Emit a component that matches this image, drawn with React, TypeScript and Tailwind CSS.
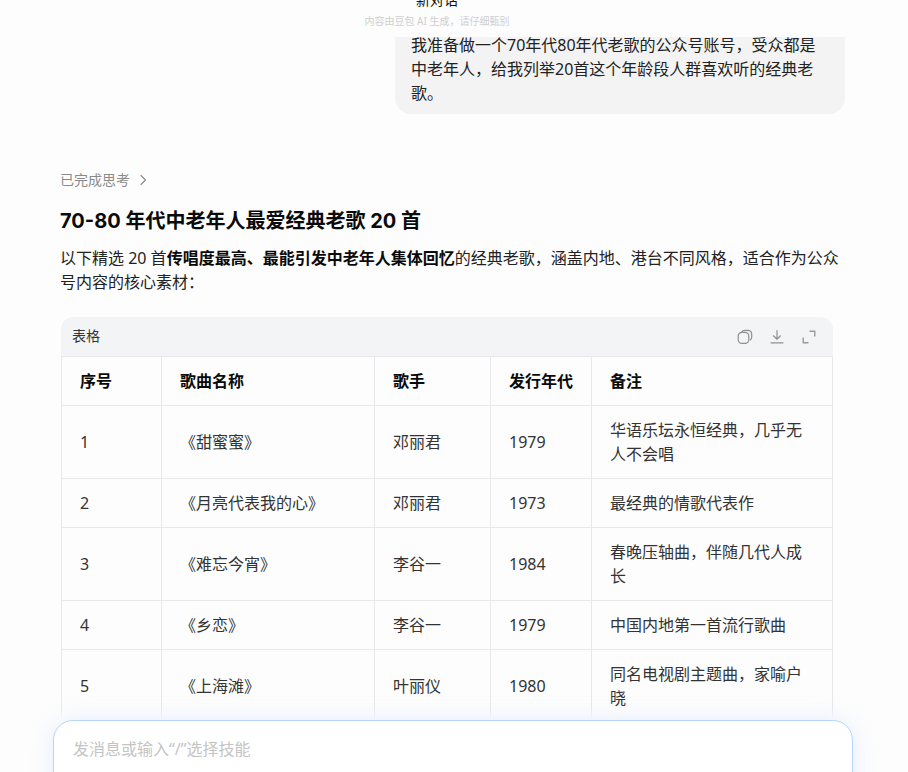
const rows = [
  { no: "1", song: "《甜蜜蜜》", singer: "邓丽君", year: "1979", note: "华语乐坛永恒经典，几乎无人不会唱" },
  { no: "2", song: "《月亮代表我的心》", singer: "邓丽君", year: "1973", note: "最经典的情歌代表作" },
  { no: "3", song: "《难忘今宵》", singer: "李谷一", year: "1984", note: "春晚压轴曲，伴随几代人成长" },
  { no: "4", song: "《乡恋》", singer: "李谷一", year: "1979", note: "中国内地第一首流行歌曲" },
  { no: "5", song: "《上海滩》", singer: "叶丽仪", year: "1980", note: "同名电视剧主题曲，家喻户晓" },
];

const headers = ["序号", "歌曲名称", "歌手", "发行年代", "备注"];

const CopyIcon = () => (
  <svg width="16" height="16" viewBox="0 0 16 16" fill="none" stroke="#8f8f94" strokeWidth="1.2">
    <rect x="1.2" y="3.4" width="10.6" height="11" rx="3.6" />
    <path d="M5 2.6c.6-.9 1.5-1.3 2.5-1.3h3.6a3.6 3.6 0 0 1 3.6 3.6v3.4c0 1-.5 2-1.4 2.6" strokeLinecap="round" />
  </svg>
);

const DownloadIcon = () => (
  <svg width="16" height="16" viewBox="0 0 16 16" fill="none" stroke="#8f8f94" strokeWidth="1.2" strokeLinecap="round" strokeLinejoin="round">
    <path d="M8 1.5v8.5M4.5 6.8 8 10.2l3.5-3.4M2 13.8h12" />
  </svg>
);

const ExpandIcon = () => (
  <svg width="16" height="16" viewBox="0 0 16 16" fill="none" stroke="#9a9a9e" strokeWidth="1.4" strokeLinejoin="round">
    <path d="M8.5 2.2h5.3v5.3M7.5 13.8H2.2V8.5" />
  </svg>
);

export default function App() {
  return (
    <div
      className="relative flex h-[772px] w-[908px] flex-col overflow-hidden bg-[#fdfdfd] text-[#1f1f1f]"
      style={{ fontFamily: '"Noto Sans", "Noto Sans CJK SC", sans-serif' }}
    >
      {/* Header, scrolled partly out of the window */}
      <div className="z-10 flex h-[37px] shrink-0 flex-col items-center bg-[#fdfdfd] pr-[34px]">
        <div className="mt-[-11px] text-[14px] leading-[22px] text-[#111]">新对话</div>
        <div className="mt-[3px] text-[10px] leading-[14px] text-[#cfcfcf]">内容由豆包 AI 生成，请仔细甄别</div>
      </div>

      <div className="ml-[60px] mt-[-13px] w-[785px]">
        <div className="ml-auto w-[450px] rounded-2xl bg-[#f3f3f3] px-4 pt-[9px] pb-[9px] text-[16px] leading-6 text-[#222]">
          我准备做一个70年代80年代老歌的公众号账号，受众都是中老年人，给我列举20首这个年龄段人群喜欢听的经典老歌。
        </div>

        <div className="mt-[56px] flex items-center gap-[7px] text-[14px] leading-5 text-[#8a8a8a]">
          <span>已完成思考</span>
          <svg width="12" height="12" viewBox="0 0 12 12" fill="none" stroke="#8a8a8a" strokeWidth="1.1" strokeLinecap="round" strokeLinejoin="round">
            <path d="M4 1.5 8.5 6 4 10.5" />
          </svg>
        </div>

        <h2
          className="mt-[17px] text-[20px] leading-7 font-bold text-[#0a0a0a]"
          style={{ fontFamily: 'Inter, "Noto Sans CJK SC", sans-serif' }}
        >
          70-80 年代中老年人最爱经典老歌 20 首
        </h2>

        <p className="mt-[11px] text-[16px] leading-6 text-[#222]">
          以下精选 20 首<strong className="font-bold text-[#0a0a0a]">传唱度最高、最能引发中老年人集体回忆</strong>的经典老歌，涵盖内地、港台不同风格，适合作为公众号内容的核心素材：
        </p>

        <div className="mt-[23px] ml-px w-[772px] overflow-hidden rounded-t-xl">
          <div className="flex h-[39px] items-center justify-between bg-[#f3f4f6] pr-[16px] pl-[11px]">
            <span className="mt-[-2px] text-[14px] text-[#333]">表格</span>
            <div className="flex items-center gap-4">
              <CopyIcon />
              <DownloadIcon />
              <ExpandIcon />
            </div>
          </div>
          <table className="w-[772px] table-fixed border-collapse border border-[#e9e9eb] text-[16px] leading-6">
            <colgroup>
              <col className="w-[100px]" />
              <col className="w-[213px]" />
              <col className="w-[116px]" />
              <col className="w-[101px]" />
              <col />
            </colgroup>
            <thead>
              <tr>
                {headers.map((h) => (
                  <th key={h} className="h-[49px] border border-[#e9e9eb] pl-[18px] text-left font-bold text-[#0a0a0a]">
                    {h}
                  </th>
                ))}
              </tr>
            </thead>
            <tbody>
              {rows.map((r) => (
                <tr key={r.no}>
                  <td className="border border-[#e9e9eb] px-[18px] py-3 text-[#333]">{r.no}</td>
                  <td className="border border-[#e9e9eb] px-[18px] py-3 text-[#333]">{r.song}</td>
                  <td className="border border-[#e9e9eb] px-[18px] py-3 text-[#333]">{r.singer}</td>
                  <td className="border border-[#e9e9eb] px-[18px] py-3 text-[#333]">{r.year}</td>
                  <td className="border border-[#e9e9eb] px-[18px] py-3 text-[#333]">{r.note}</td>
                </tr>
              ))}
            </tbody>
          </table>
        </div>
      </div>

      {/* Composer floating over the conversation */}
      <div className="absolute right-0 bottom-0 left-0 h-[64px] bg-gradient-to-b from-[#fdfdfd00] to-[#fdfdfd] to-[19%]">
        <div className="absolute top-[12px] left-[53px] h-[90px] w-[800px] rounded-[20px] border border-[#b7d5ff] bg-white px-[19px] pt-[16px] text-[16px] leading-6 text-[#c4c4c4] shadow-[0_0_24px_rgba(130,175,255,0.2)]">
          发消息或输入“/”选择技能
        </div>
      </div>
    </div>
  );
}
